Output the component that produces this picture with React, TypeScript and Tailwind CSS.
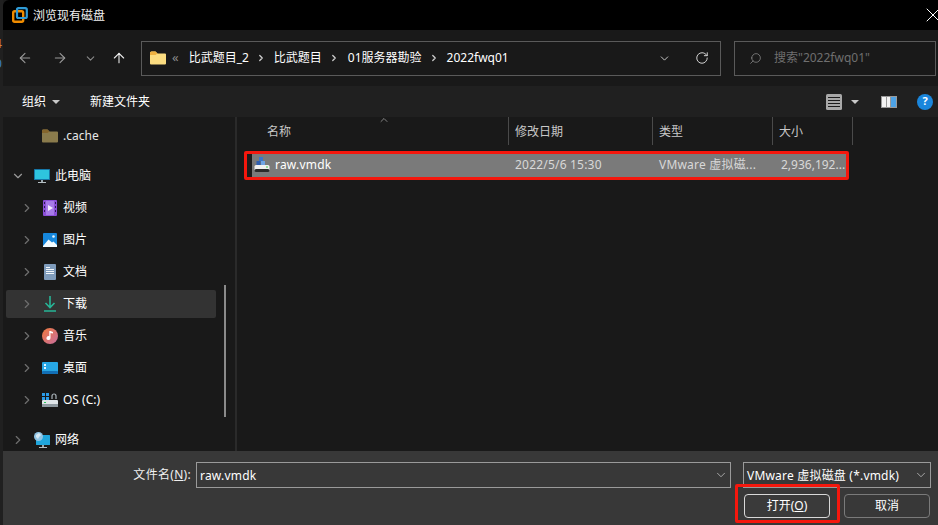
import { ArrowLeft, ArrowRight, ArrowUp, ChevronDown, ChevronRight, ChevronUp, RotateCw, Search, X } from "lucide-react"
import type { ReactNode } from "react"

const FolderIcon = ({ dim }: { dim?: boolean }) => (
  <svg width="16" height="14" viewBox="0 0 16 14" className={dim ? "opacity-50" : ""}>
    <path d="M0 2A1.5 1.5 0 0 1 1.5.5h4L7.5 2.5H15a1 1 0 0 1 1 1v9a1 1 0 0 1-1 1H1a1 1 0 0 1-1-1z" fill="#fbdc80" />
    <path d="M0 2A1.5 1.5 0 0 1 1.5.5h4L7.5 2.5 5.5 4H0z" fill="#eeb040" />
  </svg>
)

const VmwareLogo = () => (
  <svg width="16" height="16" viewBox="0 0 16 16">
    <rect x="1.2" y="4.2" width="10" height="10.5" rx="1.5" fill="none" stroke="#f08c00" strokeWidth="2.4" />
    <rect x="5" y="1.2" width="9.8" height="9.8" rx="1.5" fill="none" stroke="#2f9bd6" strokeWidth="2.2" />
  </svg>
)

const PcIcon = () => (
  <svg width="16" height="16" viewBox="0 0 16 16">
    <rect x="0" y="1" width="16" height="11" rx="0.5" fill="#1677a8" />
    <rect x="1" y="2" width="14" height="9" fill="#2ec4de" />
    <rect x="7" y="12" width="2" height="2" fill="#9aa7ad" />
    <rect x="4" y="14" width="8" height="1" fill="#b4bec3" />
  </svg>
)

const VideoIcon = () => (
  <svg width="14" height="16" viewBox="0 0 14 16">
    <rect width="14" height="16" rx="1" fill="#8b4fd8" />
    <rect x="3" y="1" width="8" height="14" fill="#a77be8" />
    <path d="M5 5l5 3-5 3z" fill="#f4ecff" />
    <path d="M1 2h1v2H1zM1 6h1v2H1zM1 10h1v2H1zM12 2h1v2h-1zM12 6h1v2h-1zM12 10h1v2h-1z" fill="#2c1a52" />
  </svg>
)

const PictureIcon = () => (
  <svg width="14" height="14" viewBox="0 0 14 14">
    <rect width="14" height="14" rx="1" fill="#1687dc" />
    <circle cx="10.5" cy="3.5" r="1.3" fill="#e8f6ff" />
    <path d="M0 13l5.5-6.5L9 9.5l1.5-1L14 12v2H0z" fill="#f2fbff" />
  </svg>
)

const DocIcon = () => (
  <svg width="12" height="16" viewBox="0 0 12 16">
    <rect width="12" height="16" rx="1" fill="#7f9cbc" />
    <path d="M2 3h4v1H2zM2 5h8v1H2zM2 7h8v1H2zM2 9h8v1H2z" fill="#f2f6fa" />
  </svg>
)

const DownloadIcon = () => (
  <svg width="12" height="16" viewBox="0 0 12 16" fill="none" stroke="#27b597" strokeWidth="1.6">
    <path d="M6 0v11M1.5 7L6 11.5 10.5 7M0 15h12" />
  </svg>
)

const MusicIcon = () => (
  <svg width="16" height="16" viewBox="0 0 16 16">
    <defs>
      <linearGradient id="mus" x1="0" y1="0" x2="1" y2="1">
        <stop offset="0" stopColor="#f0793c" />
        <stop offset="1" stopColor="#c76ea0" />
      </linearGradient>
    </defs>
    <circle cx="8" cy="8" r="8" fill="url(#mus)" />
    <path d="M8.5 3v7a2 2 0 1 1-1.2-1.8V3zM8.5 3l2.5 1v1.6L8.5 5z" fill="#fff" />
  </svg>
)

const DesktopIcon = () => (
  <svg width="16" height="12" viewBox="0 0 16 12">
    <rect width="16" height="12" rx="1" fill="#27a7e4" />
    <rect y="9" width="16" height="3" rx="1" fill="#126fb5" />
    <rect x="2" y="2" width="2" height="2" fill="#dff4ff" />
    <rect x="2" y="5" width="2" height="2" fill="#dff4ff" />
  </svg>
)

const DriveIcon = () => (
  <svg width="16" height="15" viewBox="0 0 16 15">
    <path d="M0 0h3v3H0zM4 0h3v3H4zM0 4h3v3H0zM4 4h3v3H4z" fill="#2a9be8" />
    <path d="M10 6V3a2 2 0 0 1 4 0v3" fill="none" stroke="#aab4ba" strokeWidth="1.2" />
    <rect x="0" y="7" width="16" height="6" rx="1" fill="#dfe5e8" />
    <rect x="0" y="11" width="16" height="3" fill="#8f9aa1" />
    <rect x="2" y="9" width="2" height="1" fill="#2cc45a" />
  </svg>
)

const NetworkIcon = () => (
  <svg width="16" height="16" viewBox="0 0 16 16">
    <rect x="2" y="3" width="14" height="10" rx="0.5" fill="#20a6dc" />
    <rect x="8" y="13" width="2" height="2" fill="#9aa7ad" />
    <rect x="5" y="15" width="8" height="1" fill="#b4bec3" />
    <circle cx="4.5" cy="4.5" r="4.5" fill="#8fc4e4" />
    <path d="M2 3l3-2 2 2-2 2-1 2-2-2z" fill="#d5e8f4" />
  </svg>
)

const VmdkIcon = () => (
  <svg width="16" height="16" viewBox="0 0 16 16">
    <rect x="5" y="0" width="4" height="4" fill="#3b76c9" />
    <rect x="2.5" y="4" width="4" height="4" fill="#2f5fb0" />
    <rect x="7" y="4" width="4" height="4" fill="#6fa4e4" />
    <rect x="0.5" y="8" width="15" height="6.5" rx="1.5" fill="#f0f0f0" />
    <rect x="0.5" y="12" width="15" height="3" rx="1.5" fill="#2a2a2a" />
    <rect x="12" y="9.5" width="2" height="1" fill="#41d456" />
  </svg>
)

const ViewIcon = () => (
  <svg width="16" height="16" viewBox="0 0 16 16">
    <rect width="16" height="16" rx="1.5" fill="#a8a8a8" />
    <path d="M2 3h12v1H2zM2 6h12v1H2zM2 9h12v1H2zM2 12h12v1H2z" fill="#1c1c1c" />
  </svg>
)

const PaneIcon = () => (
  <svg width="16" height="12" viewBox="0 0 16 12">
    <rect width="16" height="12" fill="#9a9a9a" />
    <rect x="1" y="1" width="4" height="10" fill="#f4f4f4" />
    <rect x="6" y="1" width="3" height="10" fill="#f4f4f4" />
    <rect x="10" y="1" width="5" height="10" fill="#4ea3e6" />
  </svg>
)

const Caret = () => (
  <svg width="8" height="4" viewBox="0 0 8 4">
    <path d="M0 0h8L4 4z" fill="#c8c8c8" />
  </svg>
)

type NavItem = { label: string; icon: ReactNode; active?: boolean }

const places: NavItem[] = [
  { label: "视频", icon: <VideoIcon /> },
  { label: "图片", icon: <PictureIcon /> },
  { label: "文档", icon: <DocIcon /> },
  { label: "下载", icon: <DownloadIcon />, active: true },
  { label: "音乐", icon: <MusicIcon /> },
  { label: "桌面", icon: <DesktopIcon /> },
  { label: "OS (C:)", icon: <DriveIcon /> },
]

function NavRow({ label, icon, active }: NavItem) {
  return (
    <div className={`flex h-[28px] w-[210px] items-center rounded-[2px] ${active ? "bg-[#333333]" : ""}`}>
      <ChevronRight size={14} strokeWidth={2} className="ml-[14px] text-[#6e6e6e]" />
      <span className="ml-[8px] flex w-[16px] justify-center">{icon}</span>
      <span className="ml-[5px] text-white">{label}</span>
    </div>
  )
}

export default function App() {
  return (
    <div
      className="flex h-[525px] w-[938px] overflow-hidden bg-[#1c1c1c] text-[12px] text-white"
      style={{ fontFamily: '"Noto Sans", "Noto Sans CJK SC", sans-serif' }}
    >
      {/* sliver of the window behind */}
      <div className="flex w-[3px] shrink-0 flex-col overflow-hidden bg-[#202020] pt-[34px] leading-[20px]">
        <span className="-ml-[5px] text-[#d08a3c]">4</span>
        <span className="-ml-[5px] text-[#3f7fc0]">0</span>
      </div>

      <div className="flex min-w-0 flex-1 flex-col">
        {/* title bar */}
        <div className="flex h-[30px] shrink-0 items-center overflow-hidden rounded-tl-[6px] bg-black pl-[9px]">
          <VmwareLogo />
          <span className="ml-[5px] pt-[1px] text-[#f0f0f0]">浏览现有磁盘</span>
          <X size={24} strokeWidth={1} className="ml-auto -mr-[7px]" />
        </div>

        {/* nav bar */}
        <div className="flex h-[56px] shrink-0 items-center bg-[#191919]">
          <ArrowLeft size={16} strokeWidth={1.6} className="ml-[14px] text-[#9a9a9a]" />
          <ArrowRight size={16} strokeWidth={1.6} className="ml-[19px] text-[#9a9a9a]" />
          <ChevronDown size={13} strokeWidth={2} className="ml-[16px] text-[#8a8a8a]" />
          <ArrowUp size={16} strokeWidth={1.6} className="ml-[14px] text-[#eeeeee]" />
          <div className="ml-[14px] flex h-[35px] w-[580px] items-center border border-[#5a5a5a] pl-[8px] pr-[11px]">
            <FolderIcon />
            <span className="ml-[6px] text-[13px] text-[#8a8a8a]">«</span>
            <span className="ml-[10px]">比武题目_2</span>
            <ChevronRight size={10} strokeWidth={3} className="ml-[7px] text-[#cfcfcf]" />
            <span className="ml-[8px]">比武题目</span>
            <ChevronRight size={10} strokeWidth={3} className="ml-[7px] text-[#cfcfcf]" />
            <span className="ml-[9px]">01服务器勘验</span>
            <ChevronRight size={10} strokeWidth={3} className="ml-[7px] text-[#cfcfcf]" />
            <span className="ml-[8px]">2022fwq01</span>
            <ChevronDown size={13} strokeWidth={1.6} className="ml-auto mr-[24px] text-[#dddddd]" />
            <RotateCw size={14} strokeWidth={1.6} className="text-[#dddddd]" />
          </div>
          <div className="ml-[13px] flex h-[35px] w-[202px] items-center border border-[#5a5a5a] pl-[14px]">
            <Search size={13} strokeWidth={1.4} className="-scale-x-100 text-[#8a8a8a]" />
            <span className="ml-[12px] text-[#6f6f6f]">搜索"2022fwq01"</span>
          </div>
        </div>

        {/* command bar */}
        <div className="flex h-[31px] shrink-0 items-center bg-[#202020] pl-[19px] pr-[5px]">
          <span>组织</span>
          <span className="ml-[6px]"><Caret /></span>
          <span className="ml-[30px]">新建文件夹</span>
          <span className="ml-auto"><ViewIcon /></span>
          <span className="ml-[9px]"><Caret /></span>
          <span className="ml-[22px]"><PaneIcon /></span>
          <span className="ml-[20px] flex h-[16px] w-[16px] items-center justify-center rounded-full bg-[#1a86dc] text-[11px] font-bold">?</span>
        </div>

        {/* body */}
        <div className="flex min-h-0 flex-1 bg-[#191919]">
          <div className="relative w-[234px] shrink-0 overflow-hidden border-r-2 border-[#2a2a2a] pl-[3px] pt-[5px]">
            <div className="flex h-[28px] items-center">
              <span className="ml-[36px]"><FolderIcon dim /></span>
              <span className="ml-[5px] text-[#e8e8e8]">.cache</span>
            </div>
            <div className="mt-[12px] flex h-[28px] items-center">
              <ChevronDown size={14} strokeWidth={2} className="ml-[5px] text-[#9a9a9a]" />
              <span className="ml-[9px]"><PcIcon /></span>
              <span className="ml-[5px]">此电脑</span>
            </div>
            <div className="mt-[4px] flex flex-col gap-[4px]">
              {places.map((item) => (
                <NavRow key={item.label} {...item} />
              ))}
            </div>
            <div className="mt-[12px] flex h-[28px] items-center">
              <ChevronRight size={14} strokeWidth={2} className="ml-[5px] text-[#6e6e6e]" />
              <span className="ml-[9px]"><NetworkIcon /></span>
              <span className="ml-[5px]">网络</span>
            </div>
            <div className="absolute left-[221px] top-[168px] h-[132px] w-[2px] bg-[#8a8a8a]" />
          </div>

          <div className="min-w-0 flex-1">
            <div className="flex h-[28px] items-center text-[#c8c8c8]">
              <div className="relative flex h-full w-[272px] items-center border-r border-[#4a4a4a] pl-[30px] pt-[2px]">
                名称
                <ChevronUp size={12} strokeWidth={1.4} className="absolute left-[141px] top-[-3px] text-[#b0b0b0]" />
              </div>
              <div className="flex h-full w-[144px] items-center border-r border-[#4a4a4a] pl-[6px] pt-[2px]">修改日期</div>
              <div className="flex h-full w-[120px] items-center border-r border-[#4a4a4a] pl-[6px] pt-[2px]">类型</div>
              <div className="flex h-full w-[80px] items-center border-r border-[#4a4a4a] pl-[6px] pt-[2px]">大小</div>
            </div>
            <div className="ml-[7px] mt-[6px] flex h-[29px] w-[605px] items-center rounded-[2px] border-[3px] border-[#f5170d] bg-[#7a7a7a]">
              <div className="h-full w-[5px] bg-[#1c1c1c]" />
              <div className="flex items-center pb-[2px]">
                <span className="ml-[2px]"><VmdkIcon /></span>
                <span className="ml-[5px] w-[240px] tracking-[0.2px] text-white">raw.vmdk</span>
                <span className="w-[144px] tracking-[0.2px] text-[#d8d8d8]">2022/5/6 15:30</span>
                <span className="w-[122px] tracking-[0.2px] text-[#d8d8d8]">VMware 虚拟磁...</span>
                <span className="text-[#d8d8d8]">2,936,192...</span>
              </div>
            </div>
          </div>
        </div>

        {/* footer */}
        <div className="relative flex h-[74px] shrink-0 bg-[#383838] pt-[11px]">
          <span className="mt-[4px] w-[188px] text-right tracking-[0.3px] text-[#f0f0f0]">
            文件名(<span className="underline">N</span>):
          </span>
          <div className="ml-[5px] flex h-[26px] w-[535px] items-center justify-between border border-[#9a9a9a] pl-[3px] pr-[2px]">
            <span className="pt-[1px] tracking-[0.2px]">raw.vmdk</span>
            <ChevronDown size={14} strokeWidth={1.4} className="text-[#bdbdbd]" />
          </div>
          <div className="ml-[12px] flex h-[26px] w-[188px] items-center justify-between border border-[#9a9a9a] pl-[3px] pr-[2px]">
            <span className="pt-[1px] tracking-[0.2px]">VMware 虚拟磁盘 (*.vmdk)</span>
            <ChevronDown size={14} strokeWidth={1.4} className="text-[#bdbdbd]" />
          </div>
          <div className="absolute left-[741px] top-[43px] flex h-[24px] w-[86px] items-center justify-center rounded-[4px] border border-[#d8d8d8] bg-[#3a3a3a]">
            打开(<span className="underline">O</span>)
          </div>
          <div className="absolute left-[841px] top-[43px] flex h-[24px] w-[86px] items-center justify-center rounded-[4px] border border-[#7a7a7a]">
            取消
          </div>
          <div className="absolute left-[732px] top-[33px] h-[39px] w-[105px] rounded-[2px] border-[3px] border-[#f5170d]" />
        </div>
      </div>
    </div>
  )
}
